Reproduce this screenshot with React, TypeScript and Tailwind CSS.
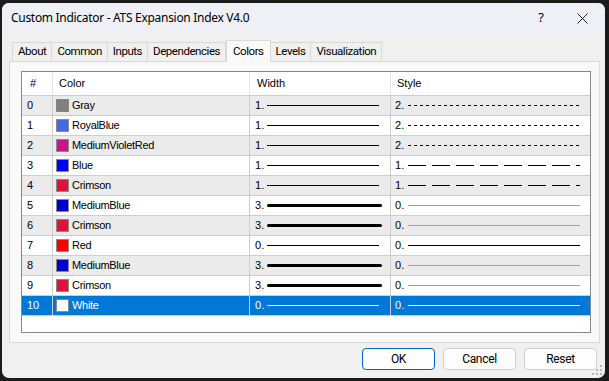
import React from 'react';

type Row = {
  id: number;
  name: string;
  color: string;
  width: number;
  style: number;
};

const rows: Row[] = [
  { id: 0, name: 'Gray', color: '#808080', width: 1, style: 2 },
  { id: 1, name: 'RoyalBlue', color: '#4169e1', width: 1, style: 2 },
  { id: 2, name: 'MediumVioletRed', color: '#c71585', width: 1, style: 2 },
  { id: 3, name: 'Blue', color: '#0000ff', width: 1, style: 1 },
  { id: 4, name: 'Crimson', color: '#dc143c', width: 1, style: 1 },
  { id: 5, name: 'MediumBlue', color: '#0000cd', width: 3, style: 0 },
  { id: 6, name: 'Crimson', color: '#dc143c', width: 3, style: 0 },
  { id: 7, name: 'Red', color: '#ff0000', width: 0, style: 0 },
  { id: 8, name: 'MediumBlue', color: '#0000cd', width: 3, style: 0 },
  { id: 9, name: 'Crimson', color: '#dc143c', width: 3, style: 0 },
  { id: 10, name: 'White', color: '#ffffff', width: 0, style: 0 },
];

const tabs = ['About', 'Common', 'Inputs', 'Dependencies', 'Colors', 'Levels', 'Visualization'];

function WidthLine({ width, selected }: { width: number; selected: boolean }) {
  const stroke = selected ? '#ffffff' : '#000000';
  if (width === 3) {
    return (
      <svg width="116" height="19" className="block">
        <line x1="1.5" y1="9.5" x2="113.5" y2="9.5" stroke={stroke} strokeWidth="3" strokeLinecap="round" />
      </svg>
    );
  }
  return (
    <svg width="116" height="19" className="block">
      <line x1="0" y1="9.5" x2="112" y2="9.5" stroke={stroke} strokeWidth="1" />
    </svg>
  );
}

function StyleLine({ style, width, selected }: { style: number; width: number; selected: boolean }) {
  let stroke = '#000000';
  if (selected) stroke = '#ffffff';
  else if (style === 0 && width === 3) stroke = '#a0a0a0';
  const dash = style === 2 ? '3 3' : style === 1 ? '18 6' : undefined;
  return (
    <svg width="173" height="19" className="block">
      <line x1="0" y1="9.5" x2="172" y2="9.5" stroke={stroke} strokeWidth="1" strokeDasharray={dash} />
    </svg>
  );
}

function SizeGrip() {
  const dots = [
    [8, 0],
    [4, 4], [8, 4],
    [0, 8], [4, 8], [8, 8],
  ];
  return (
    <svg width="11" height="11" className="block">
      {dots.map(([x, y], i) => (
        <rect key={i} x={x} y={y} width="2" height="2" fill="#b5b5b5" />
      ))}
    </svg>
  );
}

export default function App() {
  return (
    <div className="w-[609px] h-[381px] bg-[#1b1b1b] pt-[3px] pl-[2px] pr-[4px] pb-[3px] font-['Liberation_Sans',sans-serif] text-black">
      <div className="w-full h-full rounded-[7px] overflow-hidden bg-[#f0f0f0] flex flex-col">
        {/* title bar */}
        <div className="h-[30px] shrink-0 bg-[#eef0f6] flex items-center pl-[9px] font-['Noto_Sans',sans-serif] text-[12px]">
          <span className="flex-1 tracking-[-0.3px]">Custom Indicator - ATS Expansion Index V4.0</span>
          <span className="w-[46px] text-center text-[13px] mr-[-5px]">?</span>
          <span className="w-[46px] flex justify-center">
            <svg width="11" height="11" viewBox="0 0 11 11">
              <path d="M0.5 0.5 L10.5 10.5 M10.5 0.5 L0.5 10.5" stroke="#1a1a1a" strokeWidth="1" fill="none" />
            </svg>
          </span>
        </div>

        {/* tabs */}
        <div className="flex items-end h-[28px] pl-[10px] shrink-0 font-['Roboto',sans-serif] text-[11.5px] tracking-[-0.45px]">
          {tabs.map((t) => {
            const active = t === 'Colors';
            return active ? (
              <div
                key={t}
                className="h-[22px] px-[6px] -mb-px relative z-10 bg-[#f9f9f9] border border-b-0 border-[#d9d9d9] flex items-center"
              >
                {t}
              </div>
            ) : (
              <div
                key={t}
                className="h-[19px] px-[5px] border border-b-0 border-[#d9d9d9] -ml-px first:ml-0 flex items-center bg-[#f0f0f0]"
              >
                {t}
              </div>
            );
          })}
        </div>

        {/* panel */}
        <div className="ml-[7px] mr-[5px] h-[282px] shrink-0 bg-[#f9f9f9] border border-[#d9d9d9] pt-[9px] pl-[11px] pr-[8px] pb-[9px]">
          <div className="h-full border border-[#828790] bg-white text-[11px]">
            {/* header */}
            <div className="flex h-[24px] border-b border-[#cdcdcd]">
              <div className="w-[31px] border-r border-[#e5e5e5] pl-[8px] flex items-center">#</div>
              <div className="w-[197px] border-r border-[#e5e5e5] pl-[6px] flex items-center">Color</div>
              <div className="w-[141px] border-r border-[#e5e5e5] pl-[7px] flex items-center">Width</div>
              <div className="flex-1 pl-[6px] flex items-center">Style</div>
            </div>
            {rows.map((r) => {
              const selected = r.id === 10;
              const bg = selected ? 'bg-[#0078d7] text-white' : r.id % 2 === 0 ? 'bg-[#ebebeb]' : 'bg-white';
              return (
                <div key={r.id} className={`flex h-[20px] border-b border-[#cdcdcd] ${bg}`}>
                  <div className="w-[31px] border-r border-[#cdcdcd] pl-[5px] flex items-center">{r.id}</div>
                  <div className="w-[197px] border-r border-[#cdcdcd] pl-[3px] flex items-center">
                    <span
                      className="w-[13px] h-[13px] border border-[#8a8a8a] mr-[3px] shrink-0"
                      style={{ backgroundColor: r.color }}
                    />
                    <span className="tracking-[-0.3px]">{r.name}</span>
                  </div>
                  <div className="w-[141px] border-r border-[#cdcdcd] pl-[5px] flex items-center">
                    <span className="w-[12px] shrink-0">{r.width}.</span>
                    <WidthLine width={r.width} selected={selected} />
                  </div>
                  <div className="flex-1 pl-[4px] flex items-center">
                    <span className="w-[13px] shrink-0">{r.style}.</span>
                    <StyleLine style={r.style} width={r.width} selected={selected} />
                  </div>
                </div>
              );
            })}
          </div>
        </div>

        {/* buttons */}
        <div className="flex-1 flex items-start justify-end pt-[5px] pr-[8px] gap-[8px] relative font-['Roboto',sans-serif] text-[12px] tracking-[-0.3px]">
          <button className="w-[73px] h-[22px] rounded-[4px] border border-[#0067c0] bg-[#fdfdfd] flex items-center justify-center">
            OK
          </button>
          <button className="w-[73px] h-[22px] rounded-[4px] border border-[#d0d0d0] bg-[#fdfdfd] flex items-center justify-center">
            Cancel
          </button>
          <button className="w-[73px] h-[22px] rounded-[4px] border border-[#d0d0d0] bg-[#fdfdfd] flex items-center justify-center">
            Reset
          </button>
          <div className="absolute right-[2px] bottom-[2px]">
            <SizeGrip />
          </div>
        </div>
      </div>
    </div>
  );
}
